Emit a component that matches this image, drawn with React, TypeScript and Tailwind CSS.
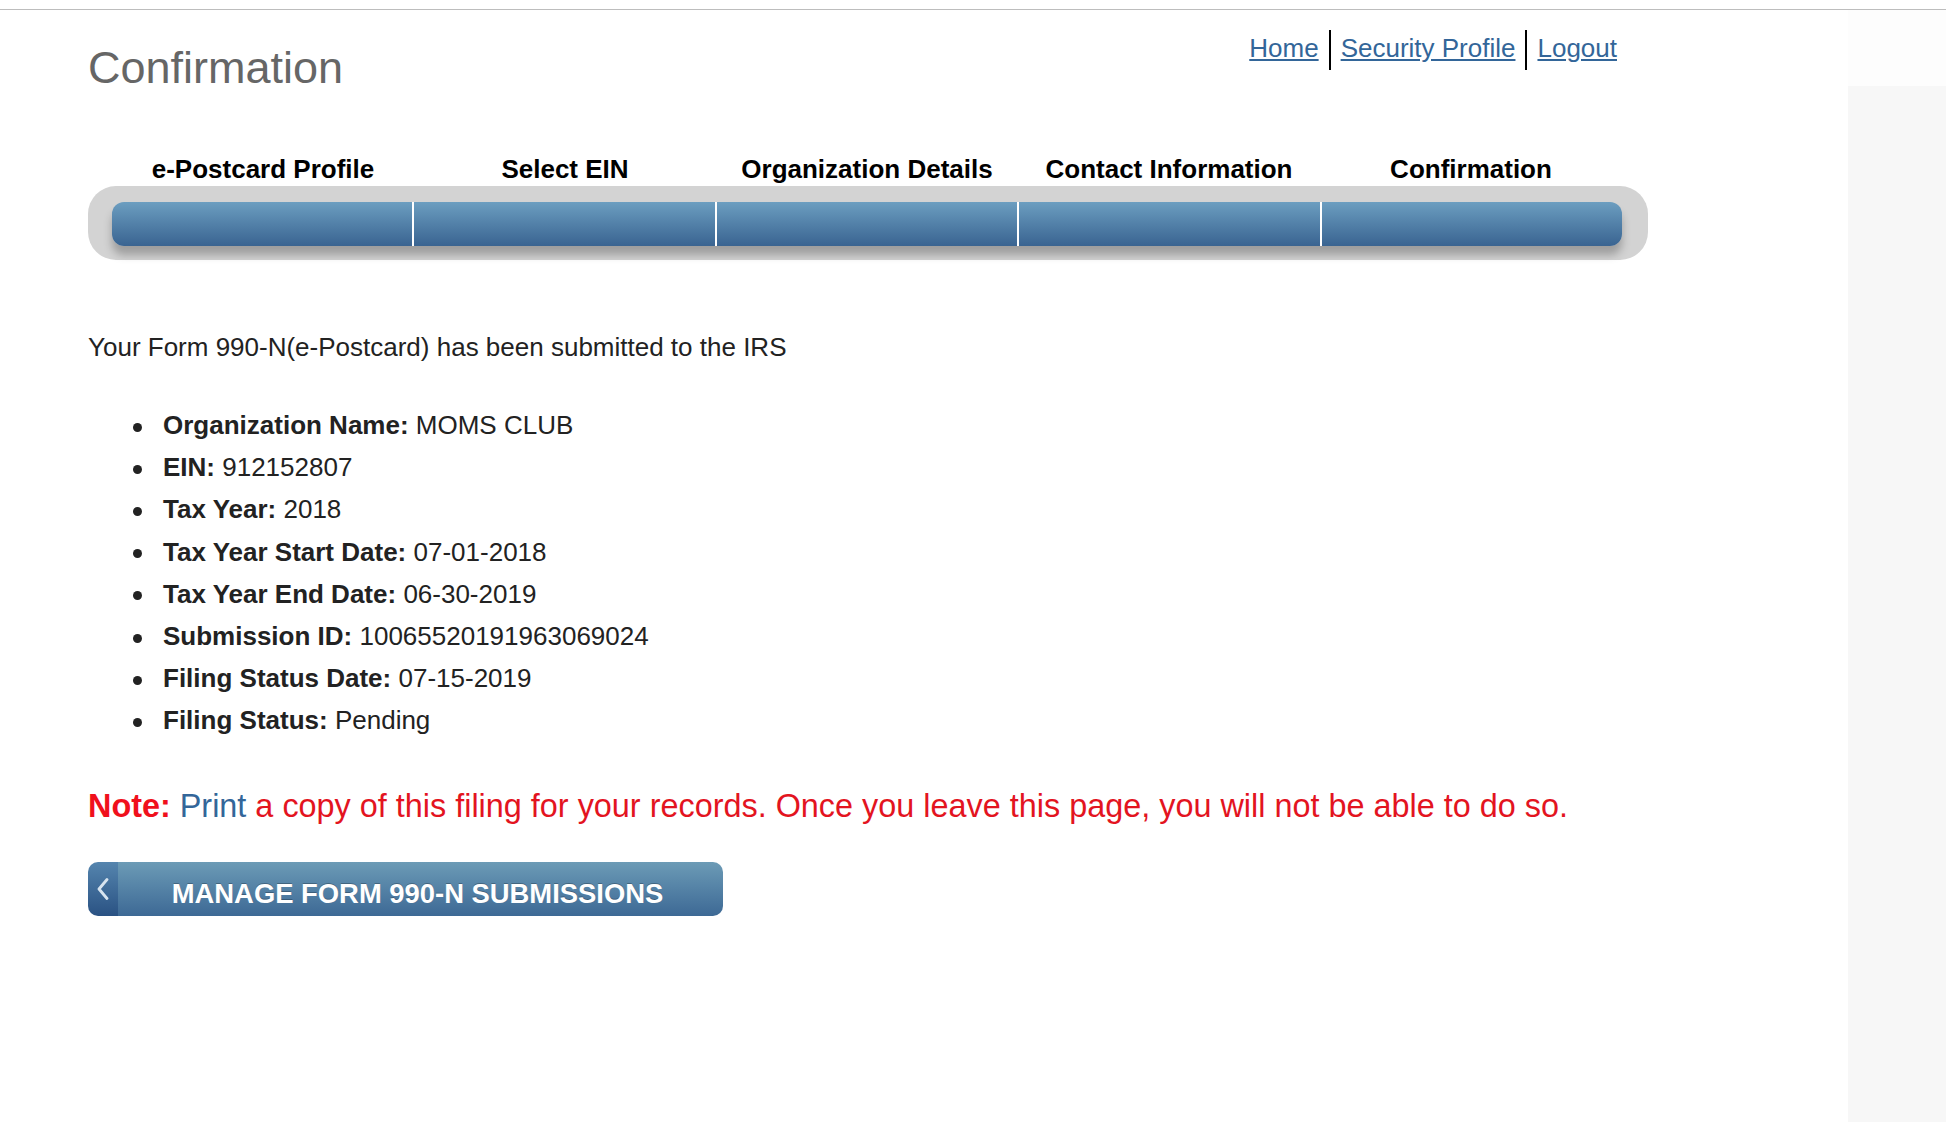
import React from "react";

const steps = [
  "e-Postcard Profile",
  "Select EIN",
  "Organization Details",
  "Contact Information",
  "Confirmation",
];

const items: [string, string][] = [
  ["Organization Name:", "MOMS CLUB"],
  ["EIN:", "912152807"],
  ["Tax Year:", "2018"],
  ["Tax Year Start Date:", "07-01-2018"],
  ["Tax Year End Date:", "06-30-2019"],
  ["Submission ID:", "10065520191963069024"],
  ["Filing Status Date:", "07-15-2019"],
  ["Filing Status:", "Pending"],
];

export default function App() {
  return (
    <div className="min-h-screen w-full bg-white font-['Liberation_Sans',Arial,sans-serif] flex flex-col">
      <div className="h-[9px]" />
      <div className="h-px bg-[#bdbdbd]" />
      <div className="flex flex-1">
        <main className="flex-1 pl-[88px] pb-[40px]">
          <div className="flex w-[1560px] items-start justify-between">
            <h1 className="mt-[32px] text-[45px] leading-[51px] font-normal text-[#666666]">
              Confirmation
            </h1>
            <nav className="mt-[20px] mr-[31px] flex items-start">
              <a href="#" className="mt-[3px] text-[26px] leading-[30px] text-[#336699] underline">
                Home
              </a>
              <span className="mx-[10px] h-[40px] w-[2px] bg-black" />
              <a href="#" className="mt-[3px] text-[26px] leading-[30px] text-[#336699] underline">
                Security Profile
              </a>
              <span className="mx-[10px] h-[40px] w-[2px] bg-black" />
              <a href="#" className="mt-[3px] text-[26px] leading-[30px] text-[#336699] underline">
                Logout
              </a>
            </nav>
          </div>

          <div className="mt-[61px] w-[1560px]">
            <div className="grid grid-cols-5 pl-[24px] pr-[26px] text-center text-[26px] leading-[30px] font-bold text-black">
              {steps.map((s) => (
                <div key={s}>{s}</div>
              ))}
            </div>
            <div className="mt-[2px] rounded-[28px] bg-[#d3d3d3] pl-[24px] pr-[26px] pt-[16px] pb-[14px]">
              <div className="flex h-[44px] overflow-hidden rounded-[12px] bg-gradient-to-b from-[#6c9ec0] to-[#3a6491] shadow-[0_9px_8px_rgba(0,0,0,0.25)]">
                {steps.map((s, i) => (
                  <div
                    key={s}
                    className={i === 0 ? "flex-1" : "flex-1 border-l-2 border-white"}
                  />
                ))}
              </div>
            </div>
          </div>

          <p className="mt-[72px] text-[26px] leading-[30px] text-[#222222]">
            Your Form 990-N(e-Postcard) has been submitted to the IRS
          </p>

          <ul className="mt-[42px]">
            {items.map(([k, v]) => (
              <li key={k} className="flex items-center text-[26px] leading-[42.2px] text-[#222222]">
                <span className="ml-[45px] mt-[4px] h-[9px] w-[9px] rounded-full bg-[#222222]" />
                <span className="ml-[21px]">
                  <b className="font-bold">{k}</b> {v}
                </span>
              </li>
            ))}
          </ul>

          <p className="mt-[46px] text-[32.4px] leading-[37px] text-[#e3141f]">
            <b className="font-bold text-[#f0101c]">Note:</b>{" "}
            <span className="text-[#336699]">Print</span> a copy of this filing for your
            records. Once you leave this page, you will not be able to do so.
          </p>

          <button className="mt-[37px] flex h-[54px] w-[635px] overflow-hidden rounded-[10px] text-left">
            <span className="flex h-full w-[30px] items-center justify-center bg-gradient-to-b from-[#5585ae] to-[#2a5283]">
              <svg width="12" height="22" viewBox="0 0 12 22">
                <polyline
                  points="10,1.5 2,11 10,20.5"
                  fill="none"
                  stroke="#d6e3ef"
                  strokeWidth="2.8"
                  strokeLinecap="round"
                  strokeLinejoin="round"
                />
              </svg>
            </span>
            <span className="flex h-full flex-1 items-center justify-center bg-gradient-to-b from-[#6c9bb6] to-[#3d6995] pt-[9px] pr-[6px] text-[27.4px] font-bold text-white [text-shadow:0_-1px_0_rgba(0,0,0,0.25)]">
              MANAGE FORM 990-N SUBMISSIONS
            </span>
          </button>
        </main>
        <aside className="flex w-[98px] flex-col">
          <div className="h-[76px] bg-[#fdfdfd]" />
          <div className="flex-1 bg-[#f7f7f7]" />
        </aside>
      </div>
    </div>
  );
}
